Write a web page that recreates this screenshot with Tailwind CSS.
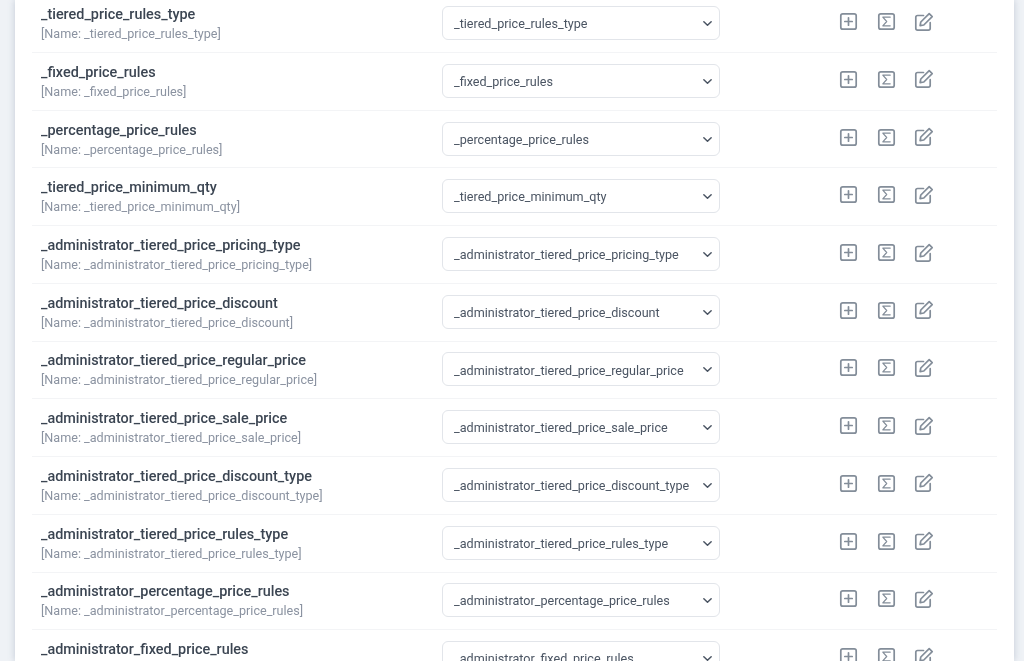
<!DOCTYPE html>
<html lang="en">
<head>
    <meta charset="UTF-8">
    <meta name="viewport" content="width=device-width, initial-scale=1.0">
    <title>Field mapping</title>
    <script src="https://cdn.jsdelivr.net/npm/@tailwindcss/browser@4"></script>
</head>
<body class="h-[661px] overflow-hidden bg-[#eff2f6] font-['Roboto',sans-serif]">
    <div class="ml-[15px] w-[999px] h-[661px] overflow-hidden bg-white pl-[17px] pr-[17px] shadow-[0_0_7px_rgba(90,110,140,0.3)] blur-[0.35px]">
        <div id="rows" class="-mt-[4.7px]"></div>
    </div>

    <script>
    const fields = [
        "_tiered_price_rules_type",
        "_fixed_price_rules",
        "_percentage_price_rules",
        "_tiered_price_minimum_qty",
        "_administrator_tiered_price_pricing_type",
        "_administrator_tiered_price_discount",
        "_administrator_tiered_price_regular_price",
        "_administrator_tiered_price_sale_price",
        "_administrator_tiered_price_discount_type",
        "_administrator_tiered_price_rules_type",
        "_administrator_percentage_price_rules",
        "_administrator_fixed_price_rules",
    ];

    const icons = `
        <svg class="w-[19px] h-[19px]" viewBox="0 0 19 19" fill="none" stroke="#838d99" stroke-width="1.7" stroke-linecap="round" stroke-linejoin="round">
            <rect x="1.8" y="1.8" width="15.4" height="15.4" rx="2"/>
            <path d="M9.5 5.8v7.4M5.8 9.5h7.4"/>
        </svg>
        <svg class="w-[19px] h-[19px] ml-[19px]" viewBox="0 0 19 19" fill="none" stroke="#838d99" stroke-width="1.7" stroke-linecap="round" stroke-linejoin="round">
            <rect x="1.8" y="1.8" width="15.4" height="15.4" rx="2"/>
            <path stroke-width="1.2" d="M13.2 5.2H5.8l3.9 4.3-3.9 4.3h7.4"/>
        </svg>
        <svg class="w-[20px] h-[20px] ml-[18px]" viewBox="0 0 20 20" fill="none" stroke="#838d99" stroke-width="1.7" stroke-linecap="round" stroke-linejoin="round">
            <path d="M9.5 3.5H3.6a1.8 1.8 0 0 0-1.8 1.8v11a1.8 1.8 0 0 0 1.8 1.8h10.8a1.8 1.8 0 0 0 1.8-1.8v-5.6"/>
            <path d="M15.2 1.6l3 3-8.4 8.4-3.7.7.7-3.7z"/>
        </svg>`;

    document.getElementById("rows").innerHTML = fields.map((name) => `
        <div class="flex items-center h-[57.73px] pl-[9px] border-b border-[#f3f4f6]">
            <div class="w-[401px] shrink-0">
                <div class="text-[14.4px] leading-[22px] font-medium text-[#3b4552]">${name}</div>
                <div class="text-[12.6px] leading-[18px] -mt-[1px] text-[#8b93a1]">[Name: ${name}]</div>
            </div>
            <div class="relative w-[278px] shrink-0 -mt-[1px]">
                <select class="w-full h-[34px] appearance-none bg-white border border-[#e2e5ea] rounded-[6px] pl-[11px] pr-[28px] pt-[3px] text-[12.6px] text-[#4b5563]">
                    <option>${name}</option>
                </select>
                <svg class="absolute right-[7px] top-[12px] w-[11px] h-[11px]" viewBox="0 0 12 12" fill="none" stroke="#4b5563" stroke-width="1.6" stroke-linecap="round" stroke-linejoin="round">
                    <path d="M2 4l4 4 4-4"/>
                </svg>
            </div>
            <div class="flex items-center ml-[119px] -mt-[4px]">${icons}</div>
        </div>`).join("");
    </script>
</body>
</html>
